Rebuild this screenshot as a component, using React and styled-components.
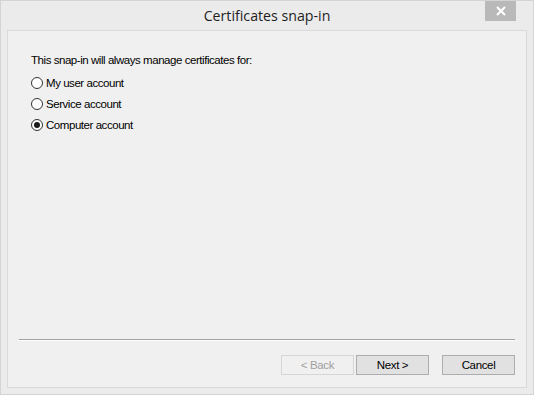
import React, { useState } from "react"
import styled, { createGlobalStyle } from "styled-components"

const GlobalStyle = createGlobalStyle`
body{
    margin: 0;
    background: #ebebeb;
}
`

const options = [
    { id: "user", label: "My user account" },
    { id: "service", label: "Service account" },
    { id: "computer", label: "Computer account" },
]

export default function App() {
    const [chosen, setChosen] = useState("computer")

    return (
        <StyledWindow>
            <GlobalStyle />
            <StyledTitleBar>
                <p>Certificates snap-in</p>
                <StyledClose aria-label="Close">
                    <svg width="10" height="10" viewBox="0 0 10 10">
                        <path d="M1 1 L9 9 M9 1 L1 9" stroke="#ffffff" strokeWidth="2" />
                    </svg>
                </StyledClose>
            </StyledTitleBar>

            <StyledPanel>
                <StyledContent>
                    <p>This snap-in will always manage certificates for:</p>
                    <StyledOptions>
                        {options.map((o) => (
                            <StyledRadioRow key={o.id} onClick={() => setChosen(o.id)}>
                                <StyledRadio checked={chosen === o.id} />
                                <span>{o.label}</span>
                            </StyledRadioRow>
                        ))}
                    </StyledOptions>
                </StyledContent>

                <StyledFooter>
                    <StyledSeparator />
                    <StyledButtons>
                        <StyledButton disabled>&lt; Back</StyledButton>
                        <StyledButton>Next &gt;</StyledButton>
                        <StyledButton className="cancel">Cancel</StyledButton>
                    </StyledButtons>
                </StyledFooter>
            </StyledPanel>
        </StyledWindow>
    )
}

const StyledWindow = styled.div`
box-sizing: border-box;
width: 534px;
height: 395px;

background: #ebebeb;
border: 1px solid #d4d4d4;
padding: 0 6px 6px 6px;

display: flex;
flex-direction: column;

font-family: 'Liberation Sans', Arial, sans-serif;
font-size: 11.5px;
letter-spacing: -0.45px;
`

const StyledTitleBar = styled.div`
position: relative;
height: 29px;

display: flex;
justify-content: center;
align-items: center;

p{
    margin: 0;
    font-family: 'Open Sans', 'Noto Sans', sans-serif;
    font-size: 14.2px;
    letter-spacing: 0;
    color: #1e1e1e;
    padding-bottom: 1px;
}
`

const StyledClose = styled.button`
position: absolute;
top: 0;
right: 11px;
width: 31px;
height: 20px;
padding: 0;

background: #b9b9b9;
border: none;

display: flex;
justify-content: center;
align-items: center;
`

const StyledPanel = styled.div`
flex: 1;
box-sizing: border-box;

background: #f0f0f0;
border: 1px solid #dadada;

display: flex;
flex-direction: column;
`

const StyledContent = styled.div`
flex: 1;
padding: 22px 23px 0 23px;

p{
    margin: 0 0 7px 0;
    line-height: 15px;
    color: #000000;
}
`

const StyledOptions = styled.div`
display: flex;
flex-direction: column;
gap: 6px;
`

const StyledRadioRow = styled.label`
display: flex;
align-items: center;
gap: 3px;
height: 15px;

color: #000000;
cursor: default;
`

const StyledRadio = styled.span`
box-sizing: border-box;
width: 12px;
height: 12px;
border-radius: 50%;

background: #ffffff;
border: 1px solid #333333;

display: flex;
justify-content: center;
align-items: center;

&::after{
    content: "";
    width: 6px;
    height: 6px;
    border-radius: 50%;
    background: #1a1a1a;
    display: ${(p) => (p.checked ? "block" : "none")};
}
`

const StyledFooter = styled.div`
padding: 0 11px 12px 11px;
`

const StyledSeparator = styled.div`
height: 1px;
background: #a0a0a0;
border-bottom: 1px solid #ffffff;
`

const StyledButtons = styled.div`
margin-top: 14px;

display: flex;
justify-content: flex-end;
gap: 2px;

.cancel{
    margin-left: 11px;
}
`

const StyledButton = styled.button`
box-sizing: border-box;
width: 73px;
height: 20px;
padding: 0;

font-family: 'Liberation Sans', Arial, sans-serif;
font-size: 11.5px;
letter-spacing: -0.35px;
color: #000000;

background: #e1e1e1;
border: 1px solid #adadad;

&:disabled{
    color: #a0a0a0;
    background: #f0f0f0;
    border-color: #d6d6d6;
}
`
